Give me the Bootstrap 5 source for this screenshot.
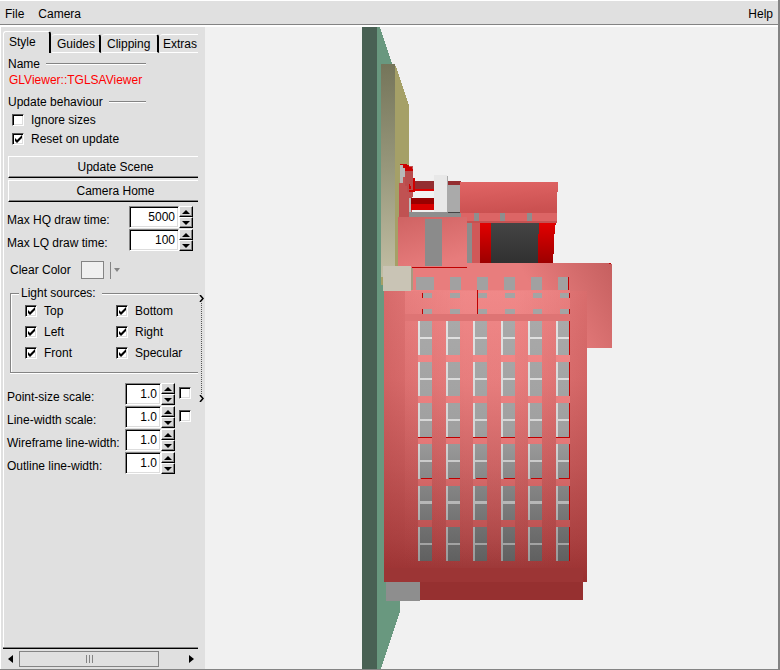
<!DOCTYPE html>
<html lang="en">
<head>
<meta charset="utf-8">
<meta name="viewport" content="width=device-width, initial-scale=1">
<title>GL Viewer</title>
<link rel="stylesheet" href="https://cdn.jsdelivr.net/npm/bootstrap@5.3.0/dist/css/bootstrap.min.css">
<style>
:root{--face:#e0e0e0;--shade:#848484;--view:#f1f1f1}
body{font:12px/16px "Liberation Sans",Arial,sans-serif;color:#000;background:var(--face)}
.app{border-right:2px solid var(--shade);border-bottom:1px solid var(--shade)}
.menu-bar{height:27px;padding:2px 2px 0;border-bottom:2px solid #fff;box-shadow:inset 0 1px #fff,inset 0 -1px var(--shade)}
.menu-bar a{color:#000;text-decoration:none;padding:0 3px}
.menu-bar .menu-list{gap:8px}
.side{width:205px;padding-left:2px;border-left:1px solid #fff}
.side,.viewer{min-height:0}
.pane{width:195px;overflow:hidden}
.tab-row{height:26px;padding-top:4px}
.tab-btn{background:none;border:0;border-top:1px solid #fff;border-right:2px solid #000;border-bottom:1px solid #fff;border-radius:3px 3px 0 0;padding:1px 0 0 5px;height:19px;line-height:16px;color:#000;text-align:left;white-space:nowrap;margin-right:1px;flex:none}
.tab-btn.active{height:22px;width:48px;border-left:1px solid #fff;border-bottom:0;align-self:flex-start;padding-bottom:3px}
.tab-guides{width:49px}.tab-clip{width:57px}
.tab-btn.tab-extra{width:60px;padding-left:3px}
.pane-body{border-left:1px solid #fff;padding-left:3px}
.heading{width:138px;height:16px;gap:6px;margin:6px 0 0 1px}
.heading:first-child{margin-top:3px}
.heading::after{content:"";height:2px;background:linear-gradient(var(--shade) 50%,#fff 50%);flex:1}
.viewer-name{color:#f00;padding-left:2px;width:141px;overflow:hidden;white-space:nowrap}
.tick{appearance:none;flex:none;width:12px;height:12px;margin:0;background:#fff;border:1px solid;border-color:#555 #fff #fff #555;border-radius:0;box-shadow:inset 1px 1px #000,inset -1px -1px #ddd}
.tick:checked{background:#fff url("data:image/svg+xml,%3Csvg xmlns='http://www.w3.org/2000/svg' viewBox='0 0 10 10'%3E%3Cpath d='M2 4v3l2 2 5-5V1L4 6z'/%3E%3C/svg%3E") 0 0/10px 10px no-repeat}
.check-line{gap:7px;height:19px;padding-left:5px}
.wide-btn{width:215px;height:22px;margin:0 0 2px 1px;padding:0;border:1px solid;border-color:#fff #000 #000 #fff;box-shadow:inset 0 -1px var(--shade);background:var(--face);border-radius:0;color:#000;display:block;line-height:18px}
.draw-times{padding-top:2px}
.num-row{height:23px}
.num-label{width:122px;padding-top:6px;white-space:nowrap;flex:none}
.num-row.narrow .num-label{width:118px}
.num-box{flex:none;width:50px;height:22px;border:1px solid;border-color:var(--shade) #fff #fff var(--shade);box-shadow:inset 1px 1px #000,inset -1px -1px #ddd;background:#fff;text-align:right;padding:0 3px 0 0;border-radius:0}
.narrow .num-box{width:36px}
.spin{flex:none;width:14px;height:22px}
.spin button{width:14px;height:11px;padding:0;border:1px solid;border-color:#fff #000 #000 #fff;box-shadow:inset -1px -1px var(--shade);background:#d8d8d8;display:flex;align-items:center;justify-content:center}
.spin svg{width:8px;height:4px}
.color-row{margin:9px 0 6px 3px}
.swatch{width:23px;height:18px;background:#f0f0f0;border:1px solid var(--shade);padding:0;margin:0 6px 0 10px}
.drop{border:0;border-left:1px solid var(--shade);background:none;padding:0 3px;height:17px;display:flex;align-items:center}
.lights{border:1px solid var(--shade);box-shadow:inset 1px 1px #fff,0 1px #fff;width:240px;height:88px;margin:0 0 10px 3px;padding:0 0 0 15px}
.lights legend{float:none;font-size:12px;line-height:16px;margin:-9px 0 -1px -7px;width:83px;padding:0 2px;background:var(--face)}
.lights .check-line{width:91px;height:21px;padding-left:0;margin-left:-1px;margin-right:1px}
.grip{width:7px;padding-top:268px}
.grip i{width:0;height:91px;border-left:1px dotted #555;margin:1px 0}
.grip svg{width:5px;height:7px}
.hscroll{height:21px;border-top:1px solid #000;box-shadow:0 -1px var(--shade);padding:0 4px 0 5px}
.hscroll button{border:0;background:none;padding:0;display:flex}
.hscroll svg{width:5px;height:8px}
.thumb{width:140px;height:16px;border:1px solid var(--shade);margin:0 auto 0 6px;gap:2px}
.thumb i{width:1px;height:8px;background:var(--shade)}
.viewer{background:var(--view)}
.viewer svg{width:100%;height:100%}
</style>
<script src="https://cdn.jsdelivr.net/npm/bootstrap@5.3.0/dist/js/bootstrap.bundle.min.js"></script>
</head>
<body>
<div class="app vh-100 d-flex flex-column overflow-hidden">
<nav class="menu-bar d-flex align-items-center justify-content-between flex-shrink-0">
  <div class="menu-list d-flex"><a href="#">File</a><a href="#">Camera</a></div>
  <a href="#">Help</a>
</nav>
<div class="d-flex flex-grow-1 overflow-hidden">
<aside class="side d-flex flex-shrink-0">
  <div class="pane d-flex flex-column">
    <div class="tab-row d-flex align-items-end" role="tablist">
      <button class="tab-btn active" role="tab" aria-selected="true">Style</button>
      <button class="tab-btn tab-guides" role="tab">Guides</button>
      <button class="tab-btn tab-clip" role="tab">Clipping</button>
      <button class="tab-btn tab-extra" role="tab">Extras</button>
    </div>
    <div class="pane-body flex-grow-1">
      <div class="heading d-flex align-items-center">Name</div>
      <div class="viewer-name">GLViewer::TGLSAViewer</div>
      <div class="heading d-flex align-items-center">Update behaviour</div>
      <label class="check-line d-flex align-items-center"><input class="tick" type="checkbox">Ignore sizes</label>
      <label class="check-line d-flex align-items-center mb-2"><input class="tick" type="checkbox" checked>Reset on update</label>
      <button class="wide-btn">Update Scene</button>
      <button class="wide-btn">Camera Home</button>
      <div class="draw-times">
        <div class="num-row d-flex"><label class="num-label" for="hq">Max HQ draw time:</label><input class="num-box" id="hq" value="5000"><div class="spin"><button aria-label="Up"><svg viewBox="0 0 8 4"><path d="M0 4 4 0l4 4z"/></svg></button><button aria-label="Down"><svg viewBox="0 0 8 4"><path d="M0 0h8L4 4z"/></svg></button></div></div>
        <div class="num-row d-flex"><label class="num-label" for="lq">Max LQ draw time:</label><input class="num-box" id="lq" value="100"><div class="spin"><button aria-label="Up"><svg viewBox="0 0 8 4"><path d="M0 4 4 0l4 4z"/></svg></button><button aria-label="Down"><svg viewBox="0 0 8 4"><path d="M0 0h8L4 4z"/></svg></button></div></div>
      </div>
      <div class="color-row d-flex align-items-center"><span>Clear Color</span><button class="swatch" aria-label="Clear color"></button><button class="drop" aria-label="Choose color"><svg width="6" height="4" viewBox="0 0 6 4"><path fill="#848484" d="M0 0h6L3 4z"/></svg></button></div>
      <fieldset class="lights">
        <legend>Light sources:</legend>
        <div class="d-flex"><label class="check-line d-flex align-items-center"><input class="tick" type="checkbox" checked>Top</label><label class="check-line d-flex align-items-center"><input class="tick" type="checkbox" checked>Bottom</label></div>
        <div class="d-flex"><label class="check-line d-flex align-items-center"><input class="tick" type="checkbox" checked>Left</label><label class="check-line d-flex align-items-center"><input class="tick" type="checkbox" checked>Right</label></div>
        <div class="d-flex"><label class="check-line d-flex align-items-center"><input class="tick" type="checkbox" checked>Front</label><label class="check-line d-flex align-items-center"><input class="tick" type="checkbox" checked>Specular</label></div>
      </fieldset>
      <div class="num-row narrow d-flex"><label class="num-label" for="ps">Point-size scale:</label><input class="num-box" id="ps" value="1.0"><div class="spin"><button aria-label="Up"><svg viewBox="0 0 8 4"><path d="M0 4 4 0l4 4z"/></svg></button><button aria-label="Down"><svg viewBox="0 0 8 4"><path d="M0 0h8L4 4z"/></svg></button></div><input class="tick ms-1 mt-1" type="checkbox" aria-label="Point-size scale on"></div>
      <div class="num-row narrow d-flex"><label class="num-label" for="lw">Line-width scale:</label><input class="num-box" id="lw" value="1.0"><div class="spin"><button aria-label="Up"><svg viewBox="0 0 8 4"><path d="M0 4 4 0l4 4z"/></svg></button><button aria-label="Down"><svg viewBox="0 0 8 4"><path d="M0 0h8L4 4z"/></svg></button></div><input class="tick ms-1 mt-1" type="checkbox" aria-label="Line-width scale on"></div>
      <div class="num-row narrow d-flex"><label class="num-label" for="wf">Wireframe line-width:</label><input class="num-box" id="wf" value="1.0"><div class="spin"><button aria-label="Up"><svg viewBox="0 0 8 4"><path d="M0 4 4 0l4 4z"/></svg></button><button aria-label="Down"><svg viewBox="0 0 8 4"><path d="M0 0h8L4 4z"/></svg></button></div></div>
      <div class="num-row narrow d-flex"><label class="num-label" for="ol">Outline line-width:</label><input class="num-box" id="ol" value="1.0"><div class="spin"><button aria-label="Up"><svg viewBox="0 0 8 4"><path d="M0 4 4 0l4 4z"/></svg></button><button aria-label="Down"><svg viewBox="0 0 8 4"><path d="M0 0h8L4 4z"/></svg></button></div></div>
    </div>
    <div class="hscroll d-flex align-items-center flex-shrink-0">
      <button aria-label="Scroll left"><svg viewBox="0 0 5 8"><path d="M5 0v8L0 4z"/></svg></button>
      <div class="thumb d-flex align-items-center justify-content-center"><i></i><i></i><i></i></div>
      <button aria-label="Scroll right"><svg viewBox="0 0 5 8"><path d="M0 0v8l5-4z"/></svg></button>
    </div>
  </div>
  <div class="grip d-flex flex-column align-items-center"><svg viewBox="0 0 5 7"><path d="m1 0 3 3.500L1 7" fill="none" stroke="#000" stroke-width="1.500"/></svg><i></i><svg viewBox="0 0 5 7"><path d="m1 0 3 3.500L1 7" fill="none" stroke="#000" stroke-width="1.500"/></svg></div>
</aside>
<main class="viewer flex-grow-1 d-flex">
<svg viewBox="205 27 573 642" preserveAspectRatio="xMidYMin meet" shape-rendering="crispEdges" role="img" aria-label="Detector model">
<defs>
<linearGradient id="front" gradientUnits="userSpaceOnUse" x1="0" y1="291" x2="0" y2="582"><stop offset="0" stop-color="#ee8686"/><stop offset=".3" stop-color="#e67c7c"/><stop offset=".6" stop-color="#ca6262"/><stop offset=".85" stop-color="#ae4848"/><stop offset="1" stop-color="#963232"/></linearGradient>
<linearGradient id="sides" gradientUnits="userSpaceOnUse" x1="384" y1="0" x2="587" y2="0"><stop offset="0" stop-color="#a02a2a" stop-opacity=".3"/><stop offset=".4" stop-color="#a02a2a" stop-opacity="0"/><stop offset=".65" stop-color="#a02a2a" stop-opacity="0"/><stop offset="1" stop-color="#a02a2a" stop-opacity=".28"/></linearGradient>
<linearGradient id="wing" gradientUnits="userSpaceOnUse" x1="550" y1="320" x2="620" y2="280"><stop offset="0" stop-color="#e87d7d"/><stop offset="1" stop-color="#c66060"/></linearGradient>
<linearGradient id="panel" x1="0" y1="0" x2="0" y2="1"><stop offset="0" stop-color="#f28b8b" stop-opacity=".5"/><stop offset=".4" stop-color="#e87e7e" stop-opacity=".25"/><stop offset="1" stop-color="#c05252" stop-opacity="0"/></linearGradient>
<linearGradient id="glass" gradientUnits="userSpaceOnUse" x1="0" y1="321" x2="0" y2="561"><stop offset="0" stop-color="#a9a9a9"/><stop offset=".45" stop-color="#a0a0a0"/><stop offset="1" stop-color="#606060"/></linearGradient>
<linearGradient id="frame" gradientUnits="userSpaceOnUse" x1="0" y1="321" x2="0" y2="561"><stop offset="0" stop-color="#e2e2e2"/><stop offset=".5" stop-color="#d4d4d4"/><stop offset="1" stop-color="#9a9a9a"/></linearGradient>
<linearGradient id="sill" gradientUnits="userSpaceOnUse" x1="0" y1="321" x2="0" y2="561"><stop offset="0" stop-color="#f48c8c"/><stop offset=".5" stop-color="#e47878"/><stop offset="1" stop-color="#b04646"/></linearGradient>
<linearGradient id="olive" x1="0" y1="0" x2="0" y2="1"><stop offset="0" stop-color="#75755a"/><stop offset=".5" stop-color="#98987c"/><stop offset="1" stop-color="#c2bea4"/></linearGradient>
<linearGradient id="roof" x1="0" y1="0" x2=".2" y2="1"><stop offset="0" stop-color="#e16565"/><stop offset="1" stop-color="#cb5151"/></linearGradient>
<linearGradient id="arm" x1="0" y1="0" x2=".4" y2="1"><stop offset="0" stop-color="#cf6363"/><stop offset="1" stop-color="#e77c7c"/></linearGradient>
<linearGradient id="redbar" x1="0" y1="0" x2="0" y2="1"><stop offset="0" stop-color="#e20000"/><stop offset="1" stop-color="#9c0000"/></linearGradient>
<linearGradient id="dark" x1="0" y1="0" x2="0" y2="1"><stop offset="0" stop-color="#444"/><stop offset="1" stop-color="#303030"/></linearGradient>
<g id="windows">
<path fill="url(#sill)" d="M418 355h14v7h-14zm0 41h14v7h-14zm0 41h14v7h-14zm0 42h14v7h-14zm0 41h14v7h-14z"/>
<path fill="url(#glass)" d="M418 321h14v34h-14zm0 41h14v34h-14zm0 41h14v34h-14zm0 41h14v35h-14zm0 42h14v34h-14zm0 41h14v34h-14z"/>
<path fill="url(#frame)" d="M418 321h2v34h-2zm0 41h2v34h-2zm0 41h2v34h-2zm0 41h2v35h-2zm0 42h2v34h-2zm0 41h2v34h-2zM420 337h12v2h-12zm0 41h12v2h-12zm0 41h12v2h-12zm0 41h12v2h-12zm0 41h12v3h-12zm0 42h12v2h-12z"/>
<path fill="#c00000" d="M418 437h14v1h-14zm3 41h11v1h-11z"/>
</g>
</defs>
<path fill="#69987f" d="M377 27h3l29 88v460l-9 36-19 58h-4z"/>
<path fill="#f1f1f1" d="M400 582h12v40h-12z"/>
<path fill="#496154" d="M362 27h15v642h-15z"/>
<path fill="#a5a067" d="M393 64h2l14 41v180h-28v-7z"/>
<path fill="url(#olive)" d="M381 64h14v213h-14z"/>
<path fill="#a5a067" d="M381 277h14v-1h2v3h-16z"/>
<path fill="#f1f1f1" d="M409 168h52v50h-52z"/>
<path fill="#c05252" d="M399 183h1v-13h5v-4h8v28l-1 6v22h-13z"/>
<path fill="#b8b8b8" d="M400 165h5v12h-2v6h-3z"/>
<path fill="#c00" d="M400 164h7v1h2v2h3v2h1v4h-8v-5h-2v-3h-3z"/>
<path fill="#b94d4d" d="M405 171h8v7h1v14h-7v-6h-2z"/>
<path fill="#d00000" d="M413 178h2v14h-6v-2h4zM409 184h1v2h1v3h-2z"/>
<path fill="#942e31" d="M415 181h46v8h-46z"/><path fill="#e00000" d="M415 189h19v2h-19z"/>
<path fill="#990000" d="M411 198h23v6h-23z"/><path fill="#d70000" d="M411 204h23v6h-23z"/>
<path fill="#bbb" d="M409 198h2v14h-2z"/><path fill="#8e8e8e" d="M409 212h52v5h-52z"/>
<path fill="#e8e8e8" d="M434 175h13v37h-13z"/><path fill="#aaa" d="M447 176h1v9h13v27h-14z"/><path fill="#444" d="M448 212h12v1h-12z"/>
<path fill="url(#roof)" d="M460 182h98v10h-1v21h-97z"/><path fill="#dc6565" d="M461 213h96v8h-96z"/><path fill="#c55252" d="M467 221h90v2h-90z"/>
<path fill="#8e8e8e" d="M474 213h5v8h-5zm26 0h5v8h-5zm27 0h5v8h-5z"/>
<path fill="#8c8c8c" d="M467 223h5v40h-5z"/><path fill="#cf5858" d="M472 223h8v40h-8z"/>
<path fill="url(#redbar)" d="M480 223h76v2h-1v9h-1v20h-1v9h-73z"/><path fill="url(#dark)" d="M491 223h48v11h-1v29h-47z"/>
<path fill="url(#wing)" d="M411 266h1v-3h199v1h1v84h-25v-52H411z"/>
<path fill="url(#arm)" d="M398 217h69v51h-69z"/><path fill="#8b8b8b" d="M425 219h17v47h-17z"/>
<path fill="#c00000" d="M412 267h55v1h-55zM609 263h2v1h-2z"/>
<path fill="url(#front)" d="M384 291h203v291H384z"/><path fill="url(#sides)" d="M384 291h203v291H384z"/>
<path fill="url(#panel)" d="M405 290h165v278H405z"/>
<path fill="#c9c4b5" d="M383 266h28v25h-28z"/><path fill="#a69b80" d="M411 268h2v22h-2z"/>
<path fill="#a1a1a1" d="M416 277h18v13h-18zm34 0h11v13h-11zm27 0h11v13h-11zm27 0h11v13h-11zm27 0h11v13h-11zm27 0h10v13h-10z"/>
<path fill="#a4a4a4" d="M423 293h9v5h-9zm27 0h10v5h-10zm28 0h9v5h-9zm27 0h10v5h-10zm28 0h9v5h-9zm27 0h9v5h-9zM423 309h9v5h-9zm27 0h10v5h-10zm28 0h9v5h-9zm27 0h10v5h-10zm28 0h9v5h-9zm27 0h9v5h-9z"/>
<path fill="#de7474" d="M405 314h165v7H405z"/>
<use href="#windows"/><use href="#windows" x="28"/><use href="#windows" x="55"/><use href="#windows" x="83"/><use href="#windows" x="110"/><use href="#windows" x="138"/>
<path fill="#c00000" d="M422 293h1v5h-1zm0 16h1v5h-1zM477 290h1v24h-1zM568 277h1v13h-1zM569 293h1v5h-1zm0 16h1v5h-1zM569 321h1v34h-1zm0 41h1v34h-1zm0 41h1v34h-1zm0 41h1v35h-1zm0 42h1v34h-1zm0 41h1v34h-1z"/>
<path fill="#9c3535" d="M384 568h199v14H384z"/><path fill="#963030" d="M420 582h163v18H420z"/>
<path fill="#8e8e8e" d="M386 582h34v19h-34z"/>
</svg>
</main>
</div>
</div>
</body>
</html>
